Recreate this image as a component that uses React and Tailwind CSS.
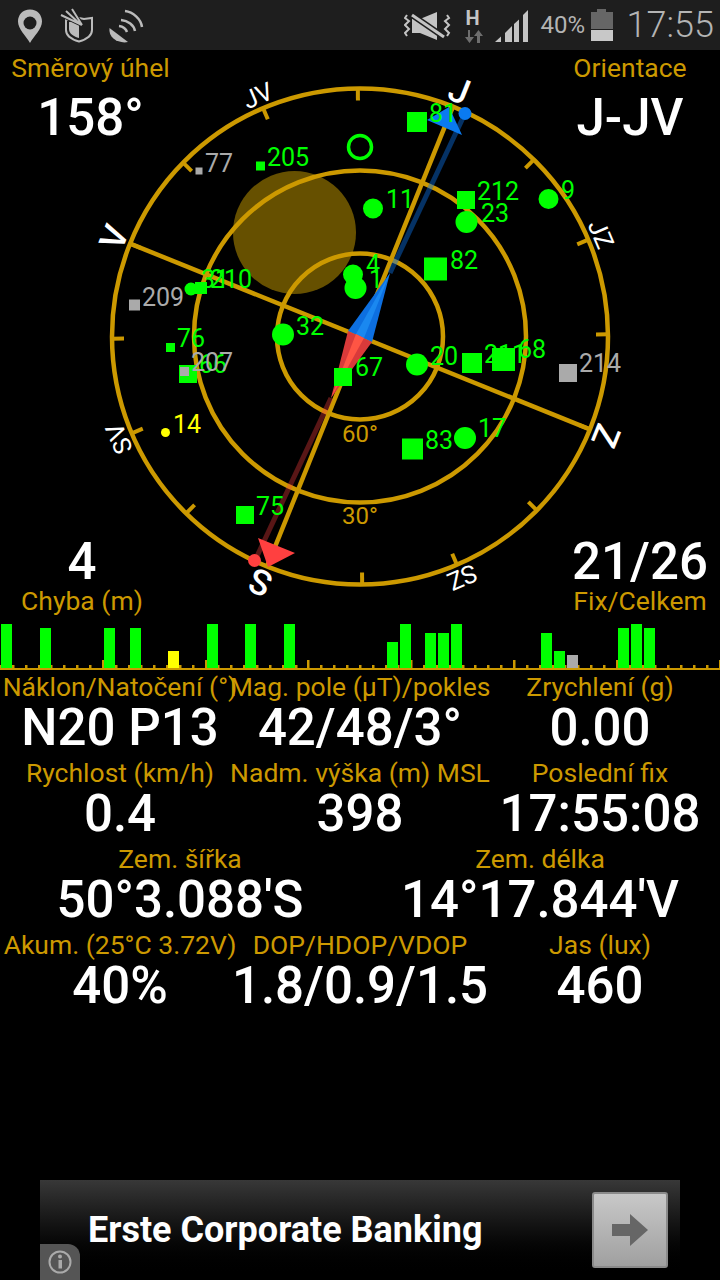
import React from 'react';

const AMBER = '#cc9900';
const CX = 360;
const CY = 336.5;
const NORTH = -158; // compass rotation, north points down-left

// kind: s = square, c = circle. lx/ly = label start and baseline
const SATS = [
  { k: 's', x: 199, y: 171, r: 3.5, c: '#aaaaaa', t: '77', lx: 205, ly: 172 },
  { k: 's', x: 260.5, y: 166, r: 4.5, c: '#00ff00', t: '205', lx: 267, ly: 166 },
  { k: 'c', x: 191, y: 289, r: 6.5, c: '#00ff00', t: '31', lx: 201, ly: 288 },
  { k: 's', x: 201, y: 288, r: 6, c: '#00ff00', t: '210', lx: 210, ly: 288 },
  { k: 's', x: 134.5, y: 305, r: 5.5, c: '#aaaaaa', t: '209', lx: 142, ly: 306 },
  { k: 'c', x: 283, y: 334.5, r: 11, c: '#00ff00', t: '32', lx: 296, ly: 335 },
  { k: 'c', x: 353, y: 274.5, r: 10, c: '#00ff00', t: '4', lx: 366, ly: 273 },
  { k: 'c', x: 355.5, y: 288, r: 11, c: '#00ff00', t: '1', lx: 369, ly: 288 },
  { k: 'c', x: 373, y: 208.5, r: 10, c: '#00ff00', t: '11', lx: 386, ly: 208 },
  { k: 's', x: 417, y: 122, r: 10, c: '#00ff00', t: '81', lx: 429, ly: 122 },
  { k: 's', x: 466, y: 200, r: 9, c: '#00ff00', t: '212', lx: 477, ly: 200 },
  { k: 'c', x: 466.5, y: 222, r: 11, c: '#00ff00', t: '23', lx: 481, ly: 222 },
  { k: 'c', x: 548.5, y: 199, r: 10, c: '#00ff00', t: '9', lx: 561, ly: 199 },
  { k: 's', x: 435.5, y: 269, r: 11.5, c: '#00ff00', t: '82', lx: 450, ly: 269 },
  { k: 's', x: 170.5, y: 347.5, r: 4.5, c: '#00ff00', t: '76', lx: 177, ly: 347 },
  { k: 's', x: 188, y: 374, r: 9, c: '#00ff00', t: '66', lx: 199, ly: 373 },
  { k: 's', x: 184.5, y: 371.5, r: 4.5, c: '#aaaaaa', t: '207', lx: 191, ly: 371 },
  { k: 'c', x: 165.5, y: 432.5, r: 4.5, c: '#ffff00', t: '14', lx: 173, ly: 433 },
  { k: 's', x: 245, y: 515, r: 9, c: '#00ff00', t: '75', lx: 256, ly: 515 },
  { k: 's', x: 343, y: 377, r: 9, c: '#00ff00', t: '67', lx: 355, ly: 376 },
  { k: 'c', x: 417, y: 364.5, r: 11, c: '#00ff00', t: '20', lx: 430, ly: 365 },
  { k: 's', x: 472, y: 363, r: 10, c: '#00ff00', t: '211', lx: 484, ly: 363 },
  { k: 's', x: 503.5, y: 359.5, r: 11.5, c: '#00ff00', t: '68', lx: 518, ly: 358 },
  { k: 's', x: 568, y: 373, r: 9, c: '#aaaaaa', t: '214', lx: 579, ly: 372 },
  { k: 's', x: 412.5, y: 449, r: 10.5, c: '#00ff00', t: '83', lx: 425, ly: 449 },
  { k: 'c', x: 465, y: 438, r: 11, c: '#00ff00', t: '17', lx: 478, ly: 437 },
];

const DIRECTIONS = [
  { t: 'S', a: 0, big: true },
  { t: 'SV', a: 45 },
  { t: 'V', a: 90, big: true },
  { t: 'JV', a: 135 },
  { t: 'J', a: 180, big: true },
  { t: 'JZ', a: 225 },
  { t: 'Z', a: 270, big: true },
  { t: 'SZ', a: 315 },
];

// signal bars: left edge, top y, colour
const BARS = [
  [1, 624], [40, 628], [104, 628], [130, 628], [168, 651, '#ffff00'], [207, 624], [245, 624], [284, 624],
  [387, 642], [400, 624], [425, 633], [438, 633], [451, 624], [541, 633], [554, 651], [567, 655, '#aaaaaa'],
  [618, 628], [631, 624], [644, 628],
];

function Compass() {
  const ticks = Array.from({ length: 16 }, (_, i) => NORTH + i * 22.5);
  return (
    <svg className="absolute inset-0" width="720" height="620" viewBox="0 50 720 620">
      <circle cx="294.5" cy="232.5" r="61.5" fill="#665000" />
      <g fill="none" stroke={AMBER} strokeWidth="4.5">
        <circle cx={CX} cy={CY} r="248" />
        <circle cx={CX} cy={CY} r="166" />
        <circle cx={CX} cy={CY} r="83" />
      </g>
      {ticks.map((a) => (
        <line key={a} x1={CX} y1={CY - 248} x2={CX} y2={CY - 236} stroke={AMBER} strokeWidth="4" transform={`rotate(${a} ${CX} ${CY})`} />
      ))}
      <g stroke={AMBER} strokeWidth="4.5" transform={`rotate(22 ${CX} ${CY})`}>
        <line x1={CX} y1={CY - 248} x2={CX} y2={CY + 248} />
        <line x1={CX - 248} y1={CY} x2={CX + 248} y2={CY} />
      </g>
      {DIRECTIONS.map((d) => (
        <text
          key={d.t}
          x={CX}
          y={CY - 253}
          textAnchor="middle"
          fill="#fff"
          fontSize={d.big ? 35 : 25}
          fontWeight={d.big ? 500 : 400}
          transform={`rotate(${NORTH + d.a} ${CX} ${CY})`}
        >
          {d.t}
        </text>
      ))}
      <text x={CX} y="442" textAnchor="middle" fill={AMBER} fontSize="24">60°</text>
      <text x={CX} y="524" textAnchor="middle" fill={AMBER} fontSize="24">30°</text>

      {/* bearing needle */}
      <line x1="390" y1="273" x2="465" y2="113.5" stroke="#0a6ee0" strokeOpacity="0.45" strokeWidth="5" />
      <line x1="331" y1="398" x2="255" y2="560.5" stroke="#ff4040" strokeOpacity="0.35" strokeWidth="5" />
      <polygon points="390,273 348,331 372,342" fill="#0d6fe0" />
      <polygon points="390,273 356,334 364,338" fill="#1a88f0" />
      <polygon points="331,398 348,331 372,342" fill="#d93a3a" />
      <polygon points="331,398 356,334 364,338" fill="#ff5544" />
      <circle cx="465" cy="113.5" r="6.5" fill="#0a7af0" />
      <circle cx="254.5" cy="560.5" r="6.5" fill="#ff4040" />
      <polygon points="427,120 449,107 462,135" fill="#0a7af0" />
      <polygon points="258,538 295,553 268,567" fill="#ff4040" />

      <circle cx="360" cy="147" r="11.5" fill="none" stroke="#00ff00" strokeWidth="3.5" />
      {SATS.map((s) =>
        s.k === 's' ? (
          <rect key={s.t} x={s.x - s.r} y={s.y - s.r} width={s.r * 2} height={s.r * 2} fill={s.c} />
        ) : (
          <circle key={s.t} cx={s.x} cy={s.y} r={s.r} fill={s.c} />
        )
      )}
      {SATS.map((s) => (
        <text key={s.t} x={s.lx} y={s.ly} fill={s.c} fontSize="25">{s.t}</text>
      ))}
    </svg>
  );
}

function SignalBars() {
  const ticks = Array.from({ length: 57 }, (_, i) => i);
  return (
    <svg className="relative block" width="720" height="50" viewBox="0 620 720 50">
      {ticks.map((i) => (
        <rect key={i} x={Math.round(i * 12.85) - 1} y={i % 8 === 0 && i > 0 ? 660 : 665} width="2.5" height="8" fill={AMBER} />
      ))}
      <rect x="0" y="668" width="720" height="2" fill={AMBER} />
      {BARS.map(([x, top, color]) => (
        <rect key={x} x={x} y={top} width="11" height={668 - top} fill={color || '#00ff00'} />
      ))}
    </svg>
  );
}

function StatusBar() {
  return (
    <div className="h-[50px] bg-[#1e1e1e] flex items-center justify-between shrink-0 text-[#b4b4b4]">
      <svg width="130" height="50" viewBox="15 0 130 50" className="ml-[15px]">
        {/* pin */}
        <path d="M30 9.5C22.5 9.5 18 15 18 21.5C18 29 26 36 30 43C34 36 42 29 42 21.5C42 15 37.5 9.5 30 9.5Z" fill="#bbb" />
        <circle cx="30" cy="23" r="6.5" fill="#1e1e1e" />
        {/* shield with arrows */}
        <path d="M66 20L74 17L84 19L92 18L92 30C92 36 86 39.5 79 41.5C72 39.5 66 36 66 30Z" fill="none" stroke="#bbb" strokeWidth="2" />
        <path d="M69 22L79 20L79 38C74 36.5 69 34 69 29Z" fill="#bbb" />
        <path d="M61 15L82 25M66 11L80 24M72 9L82 25" stroke="#1e1e1e" strokeWidth="4" />
        <path d="M61 15L82 25M66 11L80 24M72 9L82 25" stroke="#bbb" strokeWidth="2" />
        {/* dish */}
        <path d="M109.5 28L128 42C119 44 108 38 109.5 28Z" fill="#bbb" />
        <g fill="none" stroke="#bbb" strokeWidth="2.5">
          <path d="M119 26C123 26.5 126 29 127 32" />
          <path d="M121 20C128 20.5 134 25 135 31" />
          <path d="M125 11C133 12 141 19 142 27" />
        </g>
      </svg>
      <div className="flex items-center">
        <svg width="47" height="50" viewBox="405 0 47 50">
          <path d="M413 19L421 19L438 12L438 40L421 33L413 33Z" fill="#c4c4c4" />
          <path d="M413 15L445 37" stroke="#1e1e1e" strokeWidth="6" />
          <path d="M413 15L445 37" stroke="#c4c4c4" strokeWidth="3" />
          <path d="M408 15L406 18L410 21L406 25L410 29L406 33L408 36" fill="none" stroke="#c4c4c4" strokeWidth="2" />
          <path d="M448 15L450 18L446 21L450 25L446 29L450 33L448 36" fill="none" stroke="#c4c4c4" strokeWidth="2" />
        </svg>
        <svg width="18" height="50" viewBox="466 0 18 50" className="ml-[14px]">
          <text x="473.5" y="25" textAnchor="middle" fontSize="20" fontWeight="700" fill="#c4c4c4">H</text>
          <path d="M471 30L471 37L475 37L470.5 43L466 37L469 37L469 30Z" fill="#6e6e6e" />
          <path d="M478 43L478 36L475 36L479.5 30L484 36L481 36L481 43Z" fill="#6e6e6e" />
        </svg>
        <svg width="34" height="50" viewBox="496 0 34 50" className="ml-[12px]">
          <polygon points="496,42 502,36.5 502,42" fill="#c4c4c4" />
          <polygon points="506,42 506,33 513,26 513,42" fill="#c4c4c4" />
          <polygon points="515,42 515,24 520,19.5 520,42" fill="#c4c4c4" />
          <polygon points="524,42 524,15 529,10 529,42" fill="#c4c4c4" />
        </svg>
        <span className="ml-[12px] text-[24px] leading-none w-[43px] whitespace-nowrap">40%</span>
        <svg width="22" height="50" viewBox="592 0 22 50" className="ml-[7px]">
          <rect x="598" y="9" width="9" height="4" fill="#666" />
          <rect x="592" y="12" width="22" height="17" fill="#666" />
          <rect x="592" y="30" width="22" height="11" fill="#c8c8c8" />
        </svg>
        <span className="ml-[14px] mr-[6px] text-[36px] leading-none font-light">17:55</span>
      </div>
    </div>
  );
}

function Stat({ label, value }) {
  return (
    <div className="flex flex-col items-center h-[86px]">
      <div className="text-[26.5px] leading-[30px] text-[#cc9900] whitespace-nowrap flex justify-center w-full">{label}</div>
      <div className="text-[51px] leading-[52px] font-medium text-white whitespace-nowrap flex justify-center w-full">{value}</div>
    </div>
  );
}

export default function App() {
  return (
    <div className="w-[720px] h-[1280px] bg-black flex flex-col overflow-hidden" style={{ fontFamily: 'Roboto, sans-serif' }}>
      <StatusBar />

      <section className="relative h-[620px] shrink-0 flex flex-col">
        <Compass />
        <div className="relative flex justify-between pt-[3px] flex-1">
          <div className="w-[181px] text-center">
            <div className="text-[26.5px] leading-[30px] text-[#cc9900]">Směrový úhel</div>
            <div className="mt-[9px] text-[51px] leading-[52px] font-medium text-white">158°</div>
          </div>
          <div className="w-[180px] text-center">
            <div className="text-[26.5px] leading-[30px] text-[#cc9900]">Orientace</div>
            <div className="mt-[9px] text-[51px] leading-[52px] font-medium text-white">J-JV</div>
          </div>
        </div>
        <div className="relative flex justify-between pb-[5px]">
          <div className="w-[164px] text-center">
            <div className="text-[51px] leading-[50px] font-medium text-white">4</div>
            <div className="text-[26.5px] leading-[28px] text-[#cc9900]">Chyba (m)</div>
          </div>
          <div className="w-[160px] text-center">
            <div className="text-[51px] leading-[50px] font-medium text-white">21/26</div>
            <div className="text-[26.5px] leading-[28px] text-[#cc9900]">Fix/Celkem</div>
          </div>
        </div>
        <SignalBars />
      </section>

      <div className="pt-[2px]">
        <div className="grid grid-cols-3">
          <Stat label="Náklon/Natočení (°)" value="N20 P13" />
          <Stat label="Mag. pole (µT)/pokles" value="42/48/3°" />
          <Stat label="Zrychlení (g)" value="0.00" />
          <Stat label="Rychlost (km/h)" value="0.4" />
          <Stat label="Nadm. výška (m) MSL" value="398" />
          <Stat label="Poslední fix" value="17:55:08" />
        </div>
        <div className="grid grid-cols-2">
          <Stat label="Zem. šířka" value="50°3.088'S" />
          <Stat label="Zem. délka" value="14°17.844'V" />
        </div>
        <div className="grid grid-cols-3">
          <Stat label="Akum. (25°C 3.72V)" value="40%" />
          <Stat label="DOP/HDOP/VDOP" value="1.8/0.9/1.5" />
          <Stat label="Jas (lux)" value="460" />
        </div>
      </div>

      {/* ad banner */}
      <div className="relative mt-auto mx-auto w-[640px] h-[100px] flex items-center bg-gradient-to-b from-[#383838] to-black">
        <span className="ml-[48px] text-[36px] font-bold text-white whitespace-nowrap">Erste Corporate Banking</span>
        <div className="ml-auto mr-[12px] w-[76px] h-[76px] rounded-[3px] border-2 border-[#8a8a8a] bg-gradient-to-b from-[#c8c8c8] to-[#a0a0a0] flex items-center justify-center">
          <svg width="36" height="32" viewBox="0 0 36 32">
            <path d="M0 10H18V0L36 16L18 32V22H0Z" fill="#666" />
          </svg>
        </div>
        <div className="absolute left-0 bottom-0 w-[40px] h-[36px] bg-[#555] rounded-tr-[12px] flex items-center justify-center">
          <svg width="26" height="26" viewBox="0 0 26 26">
            <circle cx="13" cy="13" r="10.5" fill="none" stroke="#aaa" strokeWidth="2" />
            <rect x="11.5" y="11" width="3.5" height="8.5" fill="#aaa" />
            <circle cx="13" cy="7.5" r="2" fill="#aaa" />
          </svg>
        </div>
      </div>
    </div>
  );
}
